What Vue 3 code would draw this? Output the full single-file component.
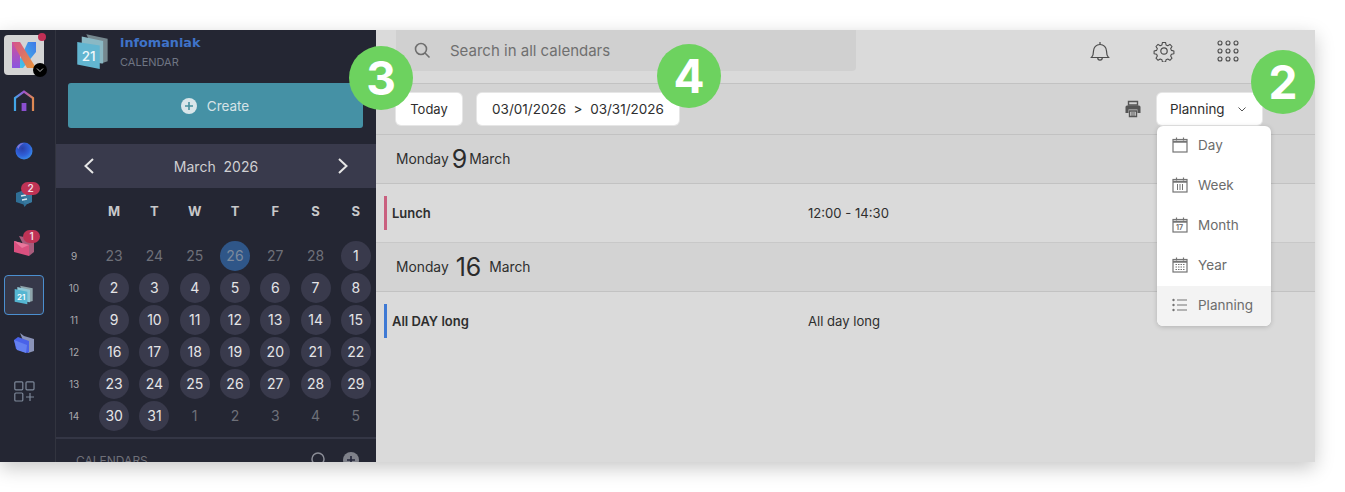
<script setup>
const weekdays = ['M', 'T', 'W', 'T', 'F', 'S', 'S']

// each week: number + days, "off" days are the ones outside of the month
const weeks = [
  { num: 9, days: [[23, 'off'], [24, 'off'], [25, 'off'], [26, 'now'], [27, 'off'], [28, 'off'], [1, 'on']] },
  { num: 10, days: [2, 3, 4, 5, 6, 7, 8].map(d => [d, 'on']) },
  { num: 11, days: [9, 10, 11, 12, 13, 14, 15].map(d => [d, 'on']) },
  { num: 12, days: [16, 17, 18, 19, 20, 21, 22].map(d => [d, 'on']) },
  { num: 13, days: [23, 24, 25, 26, 27, 28, 29].map(d => [d, 'on']) },
  { num: 14, days: [[30, 'on'], [31, 'on'], [1, 'off'], [2, 'off'], [3, 'off'], [4, 'off'], [5, 'off']] }
]

const views = ['Day', 'Week', 'Month', 'Year', 'Planning']
</script>

<template>
  <div class="page">
    <div class="window">
      <!-- rail with the apps -->
      <nav class="rail">
        <div class="rail-item logo-tile">
          <svg width="30" height="30" viewBox="0 0 30 30">
            <defs>
              <linearGradient id="kLeft" x1="0" y1="0" x2="0" y2="1">
                <stop offset="0" stop-color="#d0509c" />
                <stop offset="1" stop-color="#8a55e0" />
              </linearGradient>
              <linearGradient id="kDiag" x1="0" y1="0" x2="1" y2="1">
                <stop offset="0" stop-color="#d4528e" />
                <stop offset="1" stop-color="#e8963a" />
              </linearGradient>
              <linearGradient id="kRight" x1="1" y1="0" x2="0" y2="1">
                <stop offset="0" stop-color="#3f78e8" />
                <stop offset="1" stop-color="#46c6e8" />
              </linearGradient>
            </defs>
            <path d="M19 2h8v10L14 28h-3v-9z" fill="url(#kRight)" />
            <rect x="3" y="2" width="8" height="26" fill="url(#kLeft)" />
            <path d="M3 2h8l16 26h-9z" fill="url(#kDiag)" />
          </svg>
          <span class="logo-dot"></span>
          <span class="logo-caret">
            <svg width="8" height="8" viewBox="0 0 8 8"><path d="M1 2.500l3 3 3-3" fill="none" stroke="#bbb" stroke-width="1" /></svg>
          </span>
        </div>

        <div class="rail-item">
          <svg class="up2" width="22" height="22" viewBox="0 0 22 22">
            <defs>
              <linearGradient id="homeG" x1="0" y1="0" x2="1" y2="0">
                <stop offset="0" stop-color="#3fa8e8" />
                <stop offset=".5" stop-color="#a050d0" />
                <stop offset="1" stop-color="#e08a50" />
              </linearGradient>
            </defs>
            <path d="M2 21V8l9-6.500L20 8v13" fill="none" stroke="url(#homeG)" stroke-width="2.200" />
            <rect x="8.600" y="13" width="4.800" height="8" fill="#8b4fd0" />
          </svg>
        </div>

        <div class="rail-item">
          <svg width="18" height="18" viewBox="0 0 18 18">
            <defs>
              <radialGradient id="ball" cx=".4" cy=".35" r=".75">
                <stop offset="0" stop-color="#2a3fa8" />
                <stop offset=".55" stop-color="#2f5fd8" />
                <stop offset="1" stop-color="#3b98ee" />
              </radialGradient>
            </defs>
            <circle cx="9" cy="9" r="8.500" fill="url(#ball)" />
            <path d="M2 5c1.500-2.500 4-4 7-4-2 1-5 3-5.500 6z" fill="#7f78d8" />
          </svg>
        </div>

        <div class="rail-item">
          <svg class="chat" width="18" height="20" viewBox="0 0 18 20">
            <path d="M1 5l8-3 8 3v9l-5 2-2.500 3-1-2.500-7.500-2.500z" fill="#2f6f96" />
            <path d="M9 2l8 3v9l-5 2-3-1z" fill="#38799f" />
            <path d="M6 8l5-1M7 12l5-1" stroke="#d5e6ee" stroke-width="1.400" />
          </svg>
          <span class="count">2</span>
        </div>

        <div class="rail-item">
          <svg class="mail" width="22" height="22" viewBox="0 0 22 22">
            <path d="M6 1l15 3v13l-5 4z" fill="#a85c7c" />
            <path d="M1 6l15 4v11L1 17z" fill="#d9507f" />
            <path d="M1 6l8 7 7-3z" fill="#e8779c" />
          </svg>
          <span class="count count-small">1</span>
        </div>

        <div class="rail-item active">
          <svg width="20" height="20" viewBox="0 0 30 30">
            <path d="M9 1l19 4v19l-6 2z" fill="#8ea4ab" />
            <path d="M5 3l19 4v19L5 23z" fill="#8fc7d6" />
            <path d="M1 6l19 4v19L1 25z" fill="#55b6d2" />
            <text x="4.500" y="22" class="cal-num">21</text>
          </svg>
        </div>

        <div class="rail-item">
          <svg width="22" height="20" viewBox="0 0 22 20">
            <path d="M7 0l4 3 10 3v12l-6 2z" fill="#8a93b8" />
            <path d="M1 7l4-3 11 4v11l-2 1-11-4z" fill="#4a62e8" />
            <path d="M1 7l13 5-1 8-9-3z" fill="#6480f0" />
          </svg>
        </div>

        <div class="rail-item">
          <svg width="21" height="21" viewBox="0 0 21 21" fill="none" stroke="#7d8899" stroke-width="1.200">
            <rect x=".8" y=".8" width="8" height="8" rx="1" />
            <rect x="12" y=".8" width="8" height="8" rx="1" />
            <rect x=".8" y="12" width="8" height="8" rx="1" />
            <path d="M16 12v8M12 16h8" />
          </svg>
        </div>
      </nav>

      <!-- calendar sidebar -->
      <aside class="sidebar">
        <div class="brand">
          <svg width="32" height="36" viewBox="0 0 28 32">
            <path d="M8 1l19 4v20l-6 2z" fill="#76888f" />
            <path d="M4 3l19 4v20L4 25z" fill="#8ab8c4" />
            <path d="M0 8l20 3v21L0 28z" fill="#62b5d0" />
            <text x="4" y="24.500" class="brand-num">21</text>
          </svg>
          <div class="brand-text">
            <div class="brand-name">infomaniak</div>
            <div class="brand-app">CALENDAR</div>
          </div>
        </div>

        <button class="create">
          <svg width="16" height="16" viewBox="0 0 16 16">
            <circle cx="8" cy="8" r="8" fill="#d9e6ea" />
            <path d="M8 4v8M4 8h8" stroke="#46919f" stroke-width="1.600" />
          </svg>
          Create
        </button>

        <div class="month-bar">
          <svg width="14" height="18" viewBox="0 0 14 18"><path d="M11 2L3.500 9l7.500 7" fill="none" stroke="#e6e6e6" stroke-width="2" /></svg>
          <span class="month-title">March&nbsp; 2026</span>
          <svg width="14" height="18" viewBox="0 0 14 18"><path d="M3 2l7.500 7L3 16" fill="none" stroke="#e6e6e6" stroke-width="2" /></svg>
        </div>

        <div class="mini-head">
          <span></span>
          <span v-for="(d, i) in weekdays" :key="i">{{ d }}</span>
        </div>

        <div class="mini-grid">
          <template v-for="w in weeks" :key="w.num">
            <span class="week-num">{{ w.num }}</span>
            <span v-for="(d, i) in w.days" :key="i" class="day" :class="d[1]">{{ d[0] }}</span>
          </template>
        </div>

        <div class="calendars">
          <span>CALENDARS</span>
          <div class="calendars-tools">
            <svg width="16" height="16" viewBox="0 0 16 16"><circle cx="7" cy="7" r="6" fill="none" stroke="#8a8c96" stroke-width="1.500" /></svg>
            <svg width="16" height="16" viewBox="0 0 16 16">
              <circle cx="8" cy="8" r="8" fill="#7f818a" />
              <path d="M8 4v8M4 8h8" stroke="#24263a" stroke-width="1.600" />
            </svg>
          </div>
        </div>
      </aside>

      <main class="main">
        <header class="topbar">
          <div class="search">
            <svg width="17" height="17" viewBox="0 0 17 17" fill="none" stroke="#6f6f6f" stroke-width="1.600">
              <circle cx="7" cy="7" r="5.500" />
              <path d="M11 11l4.500 4.500" />
            </svg>
            <span>Search in all calendars</span>
          </div>
          <div class="top-icons">
            <svg width="22" height="22" viewBox="0 0 22 22" fill="none" stroke="#4c4c4c" stroke-width="1.200">
              <path d="M2.500 17.500c1.500-1.500 2-3 2-6.500 0-3.800 2.800-6.500 6.500-6.500s6.500 2.700 6.500 6.500c0 3.500.5 5 2 6.500z" />
              <path d="M11 4.500V2M8.700 17.500c0 1.600 1 2.700 2.300 2.700s2.300-1.100 2.300-2.700" />
            </svg>
            <svg width="22" height="22" viewBox="0 0 22 22" fill="none" stroke="#4c4c4c" stroke-width="1.200">
              <circle cx="11" cy="11" r="3.200" />
              <path d="M9.300 1.500h3.400l.6 2.800 1.900.8 2.400-1.500 2.300 2.400-1.500 2.400.8 1.900 2.800.6v3.200l-2.800.6-.8 1.900 1.500 2.400-2.300 2.300-2.400-1.500-1.900.8-.6 2.800H9.300l-.6-2.800-1.900-.8-2.400 1.500-2.300-2.300 1.500-2.400-.8-1.900-2.800-.6v-3.200l2.800-.6.8-1.900-1.500-2.400 2.300-2.400 2.400 1.500 1.900-.8z" transform="translate(1.100 1.100) scale(.9)" stroke-linejoin="round" />
            </svg>
            <svg width="22" height="22" viewBox="0 0 22 22" fill="none" stroke="#4c4c4c" stroke-width="1.100">
              <template v-for="y in [3, 11, 19]" :key="y">
                <circle v-for="x in [3, 11, 19]" :key="x" :cx="x" :cy="y" r="2" />
              </template>
            </svg>
          </div>
        </header>

        <div class="toolbar">
          <button class="tool-btn today-btn">Today</button>
          <button class="tool-btn range">03/01/2026&nbsp; &gt; &nbsp;03/31/2026</button>
          <svg class="printer" width="18" height="18" viewBox="0 0 18 18">
            <path d="M4.500 5V1.500h9V5z" fill="none" stroke="#555" stroke-width="1.400" />
            <path d="M3 5.500h12a1.500 1.500 0 0 1 1.500 1.500v6h-3V9.500h-9V13h-3V7A1.500 1.500 0 0 1 3 5.500z" fill="#555" />
            <path d="M5.500 11h7v5.500h-7z" fill="none" stroke="#555" stroke-width="1.400" />
            <path d="M7 13h4M7 15h4" stroke="#555" stroke-width="1" />
          </svg>
          <button class="tool-btn view">
            Planning
            <svg width="10" height="10" viewBox="0 0 10 10"><path d="M1.500 3.500L5 7l3.500-3.500" fill="none" stroke="#555" stroke-width="1" /></svg>
          </button>
        </div>

        <section class="agenda">
          <div class="day-head">Monday <b class="d-one">9</b> March</div>
          <div class="event">
            <span class="bar pink"></span>
            <span class="event-name">Lunch</span>
            <span class="event-time">12:00 - 14:30</span>
          </div>
          <div class="day-head">Monday <b class="d-two">16</b> March</div>
          <div class="event">
            <span class="bar blue"></span>
            <span class="event-name">All DAY long</span>
            <span class="event-time">All day long</span>
          </div>
        </section>

        <!-- view menu, opened -->
        <ul class="menu">
          <li v-for="v in views" :key="v" :class="{ current: v === 'Planning' }">
            <svg width="18" height="18" viewBox="0 0 18 18" fill="none" stroke="#747474" stroke-width="1.200">
              <template v-if="v !== 'Planning'">
                <rect x="2" y="3.500" width="14" height="12.500" />
                <path d="M2 5.800h14" stroke-width="2" />
                <path d="M5.500 1.500v3M12.500 1.500v3" />
                <path v-if="v === 'Week'" d="M6.500 8v6M9 8v6M11.500 8v6" stroke-width="1" />
                <text v-if="v === 'Month'" x="5" y="14" class="menu-num">17</text>
                <path v-if="v === 'Year'" d="M4.500 8.500h9M4.500 11h9M4.500 13.500h9" stroke-width="1.100" stroke-dasharray="1.500 1" />
              </template>
              <template v-else>
                <path d="M6 4h10M6 9h10M6 14h10" />
                <circle cx="2.500" cy="4" r="1.200" fill="#747474" stroke="none" />
                <circle cx="2.500" cy="9" r="1.200" fill="#747474" stroke="none" />
                <circle cx="2.500" cy="14" r="1.200" fill="#747474" stroke="none" />
              </template>
            </svg>
            {{ v }}
          </li>
        </ul>
      </main>

      <!-- numbered marks of the help page -->
      <span class="mark mark-3">3</span>
      <span class="mark mark-4">4</span>
      <span class="mark mark-2">2</span>
    </div>
  </div>
</template>

<style>
html, body {
  background: #fff;
  overflow: hidden;
}
</style>

<style scoped>
.page {
  width: 1345px;
  height: 492px;
  padding-top: 30px;
  box-sizing: border-box;
  font-family: Inter, "Liberation Sans", sans-serif;
}

.window {
  position: relative;
  display: flex;
  width: 1315px;
  height: 432px;
  background: #dadada;
  box-shadow: 0 6px 18px rgba(0, 0, 0, 0.22);
}

/* rail */
.rail {
  width: 56px;
  box-sizing: border-box;
  padding: 5px 0 0 4px;
  display: flex;
  flex-direction: column;
  gap: 8px;
  background: #242633;
  border-right: 1px solid #32343f;
  flex: none;
}

.rail-item {
  position: relative;
  width: 40px;
  height: 40px;
  box-sizing: border-box;
  display: flex;
  align-items: center;
  justify-content: center;
}

.up2 {
  margin-top: -4px;
}

.chat {
  margin-top: -3px;
}

.mail {
  margin-top: -3px;
}

.logo-tile {
  background: #d4d4d4;
  border-radius: 4px;
}

.logo-dot {
  position: absolute;
  top: -2px;
  right: -2px;
  width: 8px;
  height: 8px;
  border-radius: 50%;
  background: #c22f55;
}

.logo-caret {
  position: absolute;
  right: -3px;
  bottom: -2px;
  width: 14px;
  height: 14px;
  border-radius: 50%;
  background: #000;
  display: flex;
  align-items: center;
  justify-content: center;
}

.count {
  position: absolute;
  top: 3px;
  right: 4px;
  min-width: 19px;
  height: 13px;
  line-height: 13px;
  border-radius: 7px;
  background: #bf3355;
  color: #f2dbe1;
  font-size: 10px;
  font-weight: 600;
  text-align: center;
}

.count-small {
  min-width: 17px;
}

.rail-item.active {
  background: #363849;
  border: 1px solid #4b8fd0;
  border-radius: 4px;
}

.cal-num {
  font-size: 12px;
  font-weight: 600;
  fill: #fff;
  stroke: none;
}

.brand-num {
  font-size: 12px;
  font-weight: 500;
  fill: #eef8fb;
}

/* sidebar */
.sidebar {
  width: 320px;
  flex: none;
  background: #242633;
  overflow: hidden;
  color: #ddd;
}

.brand {
  height: 53px;
  box-sizing: border-box;
  padding: 3px 0 0 21px;
  display: flex;
  gap: 11px;
}

.brand-name {
  margin-top: 2px;
  font-family: "DejaVu Sans", sans-serif;
  font-size: 12.800px;
  line-height: 16px;
  font-weight: 700;
  color: #3f73c9;
}

.brand-app {
  margin-top: 4px;
  font-size: 11px;
  line-height: 14px;
  color: #6f7583;
}

.create {
  display: flex;
  align-items: center;
  justify-content: center;
  gap: 10px;
  width: 295px;
  height: 45px;
  padding-right: 7px;
  margin-left: 12px;
  border: 0;
  border-radius: 3px;
  background: #4591a5;
  color: #d6e3e7;
  font: 13.500px Inter, sans-serif;
}

.month-bar {
  display: flex;
  align-items: center;
  justify-content: space-between;
  height: 44px;
  margin-top: 16px;
  padding: 0 26px;
  background: #393a4c;
}

.month-title {
  font-size: 14px;
  color: #cfcfd2;
}

.mini-head {
  display: grid;
  grid-template-columns: 38px repeat(7, minmax(0, 1fr));
  height: 36px;
  margin-top: 8px;
  padding-top: 5px;
  box-sizing: border-box;
  font-size: 13px;
  font-weight: 700;
  line-height: 20px;
  color: #c8c8ca;
  text-align: center;
}

.mini-grid {
  display: grid;
  grid-template-columns: 38px repeat(7, minmax(0, 1fr));
  grid-auto-rows: 32px;
  margin-top: 8px;
  align-items: center;
  justify-items: center;
}

.week-num {
  padding-right: 2px;
  font-size: 10px;
  color: #a8a8ac;
}

.day {
  width: 30px;
  height: 30px;
  line-height: 30px;
  border-radius: 50%;
  text-align: center;
  font-size: 14px;
}

.day.on {
  background: #393a4c;
  color: #e4e4e6;
}

.day.off {
  color: #6e7079;
}

.day.now {
  background: #2f5688;
  color: #7c8a9d;
}

.calendars {
  display: flex;
  justify-content: space-between;
  align-items: center;
  margin-top: 5px;
  height: 44px;
  box-sizing: border-box;
  padding: 0 17px 0 20px;
  border-top: 2px solid #343645;
  font-size: 12px;
  color: #6f7079;
}

.calendars-tools {
  display: flex;
  gap: 16px;
}

/* main part */
.main {
  flex: 1;
  min-width: 0;
  color: #2e2e2e;
}

.topbar {
  display: flex;
  justify-content: space-between;
  height: 54px;
  box-sizing: border-box;
  padding-left: 20px;
  border-bottom: 1px solid #c2c2c2;
}

.search {
  display: flex;
  align-items: center;
  gap: 19px;
  width: 460px;
  height: 41px;
  box-sizing: border-box;
  padding-left: 18px;
  border-radius: 0 0 4px 4px;
  background: #d0d0d0;
  font-size: 15px;
  color: #6f6f6f;
}

.top-icons {
  display: flex;
  gap: 42px;
  padding: 10px 76px 0 0;
  align-items: flex-start;
}

.toolbar {
  display: flex;
  align-items: center;
  height: 51px;
  box-sizing: border-box;
  padding: 0 53px 1px 20px;
  background: #d3d3d3;
  border-bottom: 1px solid #c2c2c2;
}

.tool-btn {
  height: 32px;
  padding: 0;
  border: 0;
  border-radius: 5px;
  background: #fff;
  box-shadow: 0 0 0 1px #e6e6e6;
  color: #2e2e2e;
  font: 13px Inter, sans-serif;
}

.today-btn {
  width: 66px;
  margin-right: 15px;
}

.range {
  width: 202px;
  font-size: 13.500px;
}

.printer {
  margin-left: auto;
  margin-right: 15px;
}

.view {
  display: flex;
  align-items: center;
  justify-content: space-between;
  width: 105px;
  padding: 0 15px 0 13px;
  font-size: 13.400px;
}

.day-head {
  display: flex;
  align-items: center;
  height: 49px;
  box-sizing: border-box;
  padding: 0 0 1px 20px;
  background: #d3d3d3;
  border-bottom: 1px solid #c2c2c2;
  font-size: 13.800px;
}

.day-head:nth-child(3) {
  padding-bottom: 0;
}

.day-head b {
  font-weight: 400;
  font-size: 25px;
  color: #2b2b2b;
}

.d-one {
  margin: 0 2px 0 3px;
}

.d-two {
  margin: 0 8px 0 7px;
}

.event {
  display: flex;
  align-items: center;
  height: 58px;
  box-sizing: border-box;
  padding-left: 8px;
  font-size: 13px;
}

.event:nth-child(2) {
  height: 59px;
  border-bottom: 1px solid #c8c8c8;
}

.bar {
  width: 3px;
  height: 34px;
  margin-right: 5px;
}

.bar.pink {
  background: #c9607f;
}

.bar.blue {
  background: #3e79d4;
}

.event-name {
  width: 416px;
  font-weight: 600;
}

.event-time {
  font-size: 13.100px;
}

.menu {
  position: absolute;
  top: 96px;
  left: 1157px;
  width: 114px;
  height: 200px;
  margin: 0;
  padding: 0;
  list-style: none;
  overflow: hidden;
  background: #fff;
  border-radius: 6px;
  box-shadow: 0 1px 5px rgba(0, 0, 0, 0.18);
  font-size: 13.500px;
  color: #6c6c6c;
}

.menu li {
  display: flex;
  align-items: center;
  gap: 9px;
  height: 40px;
  padding: 0 0 2px 14px;
  box-sizing: border-box;
}

.menu li.current {
  background: #f3f3f3;
}

.menu-num {
  font-size: 7px;
  font-weight: 700;
  fill: #747474;
  stroke: none;
}

.mark {
  position: absolute;
  width: 64px;
  height: 64px;
  line-height: 64px;
  border-radius: 50%;
  background: #6dd25f;
  color: #fff;
  font-size: 46px;
  font-weight: 700;
  text-align: center;
}

.mark-3 {
  top: 16px;
  left: 349px;
}

.mark-4 {
  top: 14px;
  left: 657px;
}

.mark-2 {
  top: 20px;
  left: 1251px;
}
</style>
